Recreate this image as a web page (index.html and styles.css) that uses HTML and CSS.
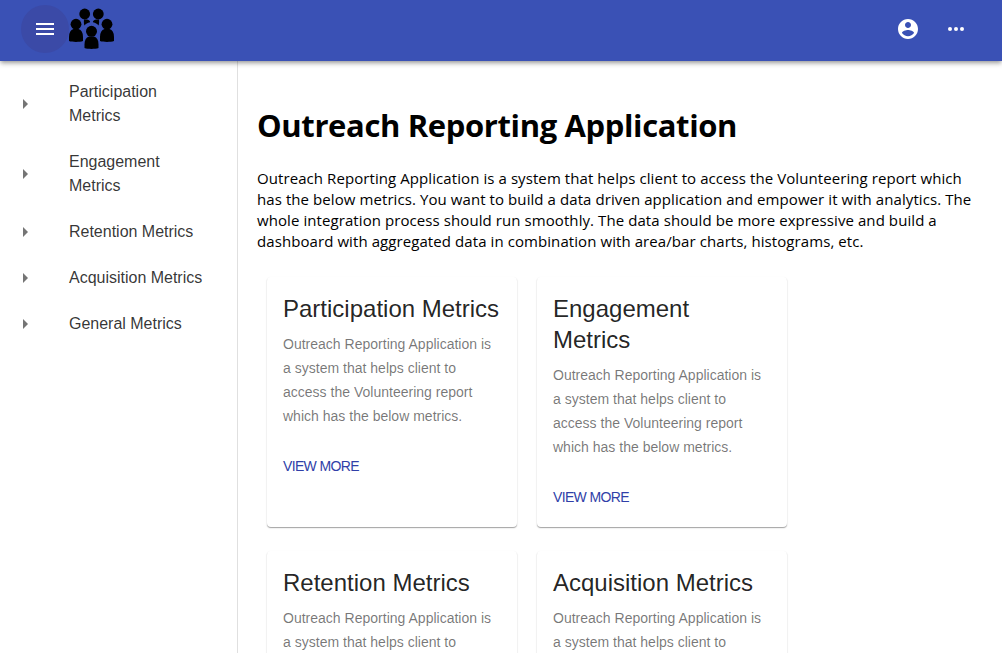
FILE: index.html
```html
<!DOCTYPE html>
<html lang="en">
<head>
<meta charset="utf-8">
<title>Outreach Reporting Application</title>
<link rel="stylesheet" href="styles.css">
</head>
<body>
<header class="app-bar">
  <button class="menu-button" aria-label="Menu"><svg width="24" height="24" viewBox="0 0 24 24"><path fill="currentColor" d="M3 18h18v-2H3v2zm0-5h18v-2H3v2zm0-7v2h18V6H3z"/></svg></button>
  <svg class="logo" width="46" height="42" viewBox="0 0 46 42">
    <circle cx="15.700" cy="6" r="5.400"/><circle cx="29.300" cy="6" r="5.400"/>
    <path d="M15 11.500h3c2.400.6 3.400 1.600 3 2.700-2.500.6-4.100 1.500-5.500 3.300-.6-1.500-.8-3.800-.5-6zM30 11.500h-3c-2.400.6-3.400 1.600-3 2.700 2.500.6 4.100 1.500 5.500 3.300.6-1.500.8-3.800.5-6z"/>
    <circle cx="7" cy="16.200" r="5.400"/><circle cx="38" cy="16.200" r="5.400"/>
    <path d="M0 33v-4c0-4.500 1.500-7 4.500-8h5c3 1 4.500 3.500 4.500 8v4c-3.500 1.200-10.500 1.200-14 0zM31 33v-4c0-4.500 1.500-7 4.500-8h5c3 1 4.500 3.500 4.500 8v4c-3.500 1.200-10.500 1.200-14 0z"/>
    <circle cx="22.500" cy="23.300" r="5.500"/>
    <path d="M15.500 40v-3.500c0-4.500 1.500-7 4.500-8h5c3 1 4.500 3.500 4.500 8V40c-3.500 1.200-10.500 1.200-14 0z"/>
  </svg>
  <div class="actions">
    <svg width="24" height="24" viewBox="0 0 24 24"><path fill="currentColor" d="M12 2C6.480 2 2 6.480 2 12s4.480 10 10 10 10-4.480 10-10S17.520 2 12 2zm0 3c1.660 0 3 1.340 3 3s-1.340 3-3 3-3-1.340-3-3 1.340-3 3-3zm0 14.200c-2.500 0-4.710-1.280-6-3.220.03-1.990 4-3.080 6-3.080 1.990 0 5.970 1.090 6 3.080-1.290 1.940-3.500 3.220-6 3.220z"/></svg>
    <svg width="24" height="24" viewBox="0 0 24 24"><g fill="currentColor"><circle cx="6" cy="12" r="2"/><circle cx="12" cy="12" r="2"/><circle cx="18" cy="12" r="2"/></g></svg>
  </div>
</header>
<div class="layout">
  <nav class="sidebar">
    <a class="nav-item"><span class="arrow"></span><span class="label">Participation Metrics</span></a>
    <a class="nav-item"><span class="arrow"></span><span class="label">Engagement Metrics</span></a>
    <a class="nav-item"><span class="arrow"></span><span class="label">Retention Metrics</span></a>
    <a class="nav-item"><span class="arrow"></span><span class="label">Acquisition Metrics</span></a>
    <a class="nav-item"><span class="arrow"></span><span class="label">General Metrics</span></a>
  </nav>
  <main class="content">
    <h1 class="title">Outreach Reporting Application</h1>
    <p class="intro">Outreach Reporting Application is a system that helps client to access the Volunteering report which<br>has the below metrics. You want to build a data driven application and empower it with analytics. The<br>whole integration process should run smoothly. The data should be more expressive and build a<br>dashboard with aggregated data in combination with area/bar charts, histograms, etc.</p>
    <div class="cards">
      <article class="card"><h2 class="card-title">Participation Metrics</h2><p class="card-text">Outreach Reporting Application is a system that helps client to access the Volunteering report which has the below metrics.</p><a class="more">VIEW MORE</a></article>
      <article class="card"><h2 class="card-title">Engagement Metrics</h2><p class="card-text">Outreach Reporting Application is a system that helps client to access the Volunteering report which has the below metrics.</p><a class="more">VIEW MORE</a></article>
      <article class="card"><h2 class="card-title">Retention Metrics</h2><p class="card-text">Outreach Reporting Application is<br>a system that helps client to</p></article>
      <article class="card"><h2 class="card-title">Acquisition Metrics</h2><p class="card-text">Outreach Reporting Application is<br>a system that helps client to</p></article>
    </div>
  </main>
</div>
</body>
</html>
```
FILE: styles.css
```css
* { box-sizing: border-box; }
html, body { margin: 0; height: 100%; overflow: hidden; }
body { display: flex; flex-direction: column; background: #fff; color: #000; font-family: "Liberation Sans", Arial, sans-serif; }
.app-bar { position: relative; z-index: 1; display: flex; flex: none; height: 61px; padding: 5px 34px 0 21px; background: #3a51b5; color: #fff; box-shadow: 0 2px 4px -1px rgba(0,0,0,.3), 0 3px 5px rgba(0,0,0,.18); }
.menu-button { display: flex; align-items: center; justify-content: center; width: 48px; height: 48px; padding: 0; border: 0; border-radius: 50%; background: #3b4aa7; color: #fff; }
.logo { margin-top: 3px; fill: #000; }
.actions { display: flex; gap: 24px; margin-left: auto; padding-top: 12px; }
.layout { display: flex; flex: 1; min-height: 0; }
.sidebar { flex: none; width: 238px; padding-top: 8px; border-right: 1px solid #e0e0e0; }
.nav-item { display: flex; align-items: center; padding: 11px 34px 11px 23px; color: rgba(0,0,0,.8); font-size: 16px; line-height: 24px; letter-spacing: -.01px; }
.nav-item .label { max-width: 135px; }
.arrow { flex: none; width: 5px; height: 10px; margin-right: 41px; background: #757575; clip-path: polygon(0 0, 100% 50%, 0 100%); }
.content { flex: 1; padding: 43px 0 0 19px; }
.title { margin: 0; font: 700 31px/43px "Open Sans", sans-serif; letter-spacing: -.37px; white-space: nowrap; }
.intro { margin: 21px 0 0; font: 400 15px/21px "Open Sans", sans-serif; letter-spacing: .08px; white-space: nowrap; }
.cards { display: grid; grid-template-columns: 250px 250px; grid-auto-rows: 250px; gap: 24px 20px; padding: 25px 0 0 10px; }
.card { padding: 16px; border-radius: 4px; background: #fff; box-shadow: 0 1px 1px rgba(0,0,0,.3), 0 1px 2px rgba(0,0,0,.1); }
.card-title { margin: 0 0 8px; color: rgba(0,0,0,.87); font-size: 24px; font-weight: 400; line-height: 31px; }
.card-text { margin: 0; color: rgba(0,0,0,.54); font-size: 14px; line-height: 24px; letter-spacing: .01px; }
.more { display: block; margin-top: 26px; color: #303fa8; font-size: 14px; line-height: 24px; letter-spacing: -.65px; }
```
